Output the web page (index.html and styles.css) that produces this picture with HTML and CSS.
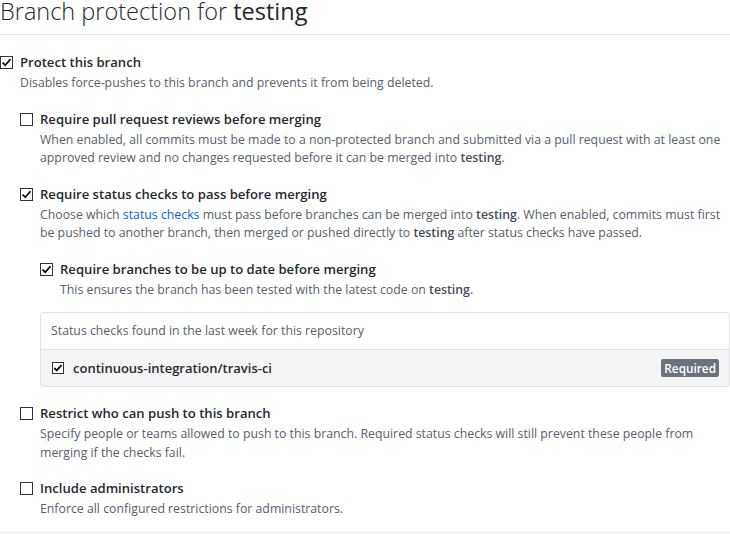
FILE: index.html
```html
<!DOCTYPE html>
<html>
<head>
<meta charset="utf-8">
<link rel="stylesheet" href="styles.css">
</head>
<body>
<div class="page">
  <h2 class="subhead">Branch protection for <strong>testing</strong></h2>
  <div class="options">
    <div class="opt">
      <span class="cb"><svg viewBox="0 0 11 11" width="11" height="11"><path d="M1.5 5.5 L4.2 8.2 L9.5 2.2" fill="none" stroke="#000" stroke-width="1.7"/></svg></span>
      <div class="opt-body">
        <div class="label">Protect this branch</div>
        <p class="note">Disables force-pushes to this branch and prevents it from being deleted.</p>

        <div class="opt">
          <span class="cb"></span>
          <div class="opt-body">
            <div class="label">Require pull request reviews before merging</div>
            <p class="note">When enabled, all commits must be made to a non-protected branch and submitted via a pull request with at least one<br>approved review and no changes requested before it can be merged into <strong>testing</strong>.</p>
          </div>
        </div>

        <div class="opt">
          <span class="cb"><svg viewBox="0 0 11 11" width="11" height="11"><path d="M1.5 5.5 L4.2 8.2 L9.5 2.2" fill="none" stroke="#000" stroke-width="1.7"/></svg></span>
          <div class="opt-body">
            <div class="label">Require status checks to pass before merging</div>
            <p class="note">Choose which <a class="link" href="#">status checks</a> must pass before branches can be merged into <strong>testing</strong>. When enabled, commits must first<br>be pushed to another branch, then merged or pushed directly to <strong>testing</strong> after status checks have passed.</p>

            <div class="opt">
              <span class="cb"><svg viewBox="0 0 11 11" width="11" height="11"><path d="M1.5 5.5 L4.2 8.2 L9.5 2.2" fill="none" stroke="#000" stroke-width="1.7"/></svg></span>
              <div class="opt-body">
                <div class="label">Require branches to be up to date before merging</div>
                <p class="note">This ensures the branch has been tested with the latest code on <strong>testing</strong>.</p>
              </div>
            </div>

            <div class="checks-box">
              <div class="checks-header">Status checks found in the last week for this repository</div>
              <div class="checks-row">
                <span class="cb cb-sm"><svg viewBox="0 0 11 11" width="10" height="10"><path d="M1.5 5.5 L4.2 8.2 L9.5 2.2" fill="none" stroke="#000" stroke-width="2"/></svg></span>
                <span class="check-name">continuous-integration/travis-ci</span>
                <span class="badge">Required</span>
              </div>
            </div>
          </div>
        </div>

        <div class="opt">
          <span class="cb"></span>
          <div class="opt-body">
            <div class="label">Restrict who can push to this branch</div>
            <p class="note">Specify people or teams allowed to push to this branch. Required status checks will still prevent these people from<br>merging if the checks fail.</p>
          </div>
        </div>

        <div class="opt">
          <span class="cb"></span>
          <div class="opt-body">
            <div class="label">Include administrators</div>
            <p class="note">Enforce all configured restrictions for administrators.</p>
          </div>
        </div>
      </div>
    </div>
  </div>
</div>
</body>
</html>
```

FILE: styles.css
```css
html, body {
  margin: 0;
  padding: 0;
  background: #fff;
}

body {
  font-family: "Open Sans", "Noto Sans", "Liberation Sans", sans-serif;
  color: #24292e;
  width: 730px;
  height: 534px;
  overflow: hidden;
}

.page {
  width: 730px;
}

.subhead {
  margin: 0;
  font-size: 23.5px;
  font-weight: 300;
  line-height: 28px;
  margin-top: -3px;
  padding-bottom: 9px;
  border-bottom: 1px solid #e1e4e8;
  color: #24292e;
  white-space: nowrap;
}

.subhead strong {
  font-weight: 400;
}

.options {
  padding-top: 17px;
  padding-bottom: 13px;
  border-bottom: 1px solid #e1e4e8;
}

.opt {
  display: grid;
  grid-template-columns: 20px 1fr;
  align-items: start;
}

.opt-body > .opt {
  margin-top: 16px;
}

.cb {
  display: flex;
  align-items: center;
  justify-content: center;
  box-sizing: border-box;
  width: 13px;
  height: 13px;
  margin-top: 4px;
  border: 1px solid #333;
  background: #fff;
}

.label {
  font-size: 13.1px;
  font-weight: 600;
  line-height: 20px;
  white-space: nowrap;
}

.note {
  margin: 2px 0 0;
  font-size: 12.3px;
  line-height: 18.5px;
  color: #586069;
  white-space: nowrap;
}

.note strong {
  font-weight: 600;
  color: #444d56;
}

.link {
  color: #0366d6;
  text-decoration: none;
}

.checks-box {
  margin-top: 13px;
  border: 1px solid #e1e4e8;
  border-radius: 3px;
  overflow: hidden;
}

.checks-header {
  height: 36px;
  line-height: 36px;
  padding: 0 10px;
  font-size: 12.3px;
  color: #586069;
  border-bottom: 1px solid #e1e4e8;
  background: #fff;
}

.checks-row {
  display: flex;
  align-items: center;
  height: 36px;
  padding: 0 10px 0 11px;
  background: #f4f4f4;
}

.cb-sm {
  margin-top: 0;
  width: 12px;
  height: 12px;
}

.check-name {
  margin-left: 9px;
  font-size: 13px;
  font-weight: 600;
  color: #24292e;
  flex: 1;
}

.badge {
  display: inline-block;
  height: 18px;
  line-height: 18px;
  padding: 0 3px;
  font-size: 11.8px;
  font-weight: 600;
  color: #fff;
  background: #6a737d;
  border-radius: 2px;
}
```
